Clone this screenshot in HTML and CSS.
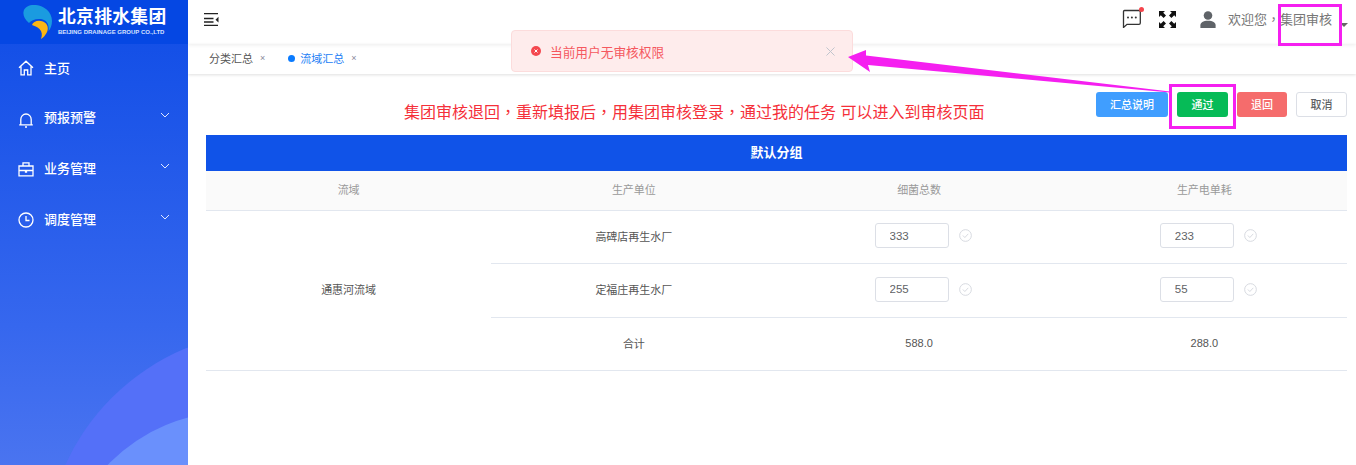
FILE: index.html
```html
<!DOCTYPE html>
<html lang="zh-CN">
<head>
  <meta charset="UTF-8" />
  <title>北京排水集团</title>
  <link rel="stylesheet" href="styles.css">
</head>
<body>

<div class="layout">
  <aside class="sidebar">
    <div class="bubble bubble-outer"></div>
    <div class="bubble bubble-inner"></div>

    <div class="logo">
      <svg class="logo-mark" width="30" height="34" viewBox="0 0 30 34">
        <path d="M9 0C18 -1 29 5 29 16C29 20 27.500 24 25.500 26C26.500 20 24 15 18 14C12 13.500 8 15.500 6 18C1.500 14 0 10 0.500 7C1 3 4.500 0.500 9 0Z" fill="#1a9be0"/>
        <path d="M9 20C10 16.500 15 14.500 20 16.500C25 18.500 26 24 23.500 28C22 30.500 20.500 32.500 18 34C19.500 30 19 26.500 16.500 24C14 21.500 11.500 21 9 20Z" fill="#fbb614"/>
      </svg>
      <div class="logo-text">
        <div class="logo-name">北京排水集团</div>
        <div class="logo-sub">BEIJING DRAINAGE GROUP CO.,LTD</div>
      </div>
    </div>

    <nav class="menu">
      <a class="menu-item menu-home">
        <svg class="menu-icon" viewBox="0 0 16 16"><path d="M1 7.800L8 1.200L15 7.800M3 6.500V14.800H6.300V10H9.700V14.800H13V6.500"/></svg>
        <span>主页</span>
      </a>
      <a class="menu-item">
        <svg class="menu-icon icon-bell" viewBox="0 0 16 16"><path d="M1.200 12.800H14.800M2.800 12.800V7.500C2.800 4.500 5 2 8 2C11 2 13.200 4.500 13.200 7.500V12.800M7 15H9"/></svg>
        <span>预报预警</span>
        <svg class="menu-arrow" viewBox="0 0 10 6"><path d="M1 1L5 5L9 1"/></svg>
      </a>
      <a class="menu-item">
        <svg class="menu-icon icon-low" viewBox="0 0 16 16"><path d="M1 5H15V14.800H1ZM1 9.500H15M5 5V1.800H11V5M7.500 9.500H8.500V11H7.500Z"/></svg>
        <span>业务管理</span>
        <svg class="menu-arrow" viewBox="0 0 10 6"><path d="M1 1L5 5L9 1"/></svg>
      </a>
      <a class="menu-item">
        <svg class="menu-icon icon-low" viewBox="0 0 16 16"><circle cx="8" cy="8" r="7"/><path d="M8 4V8.500H11.500"/></svg>
        <span>调度管理</span>
        <svg class="menu-arrow" viewBox="0 0 10 6"><path d="M1 1L5 5L9 1"/></svg>
      </a>
    </nav>
  </aside>

  <div class="main">
    <header class="topbar">
      <svg class="fold-icon" width="15" height="13" viewBox="0 0 15 13">
        <path d="M0 0.500H14M0 5.500H9.500M0 9H9.500M0 12.500H14" stroke="#222" stroke-width="1.300" fill="none"/>
        <path d="M14.500 3.800L11.500 6.800L14.500 9.500Z" fill="#222"/>
      </svg>
      <div class="topbar-right">
        <span class="msg-icon">
          <svg width="20" height="20" viewBox="0 0 20 20">
            <path d="M3.500 2.500H18C18.800 2.500 19.300 3 19.300 3.800V15C19.300 15.800 18.800 16.300 18 16.300H6L2.500 19.500V3.800C2.500 3 2.800 2.500 3.500 2.500Z" fill="none" stroke="#333" stroke-width="1.300"/>
            <circle cx="7" cy="9.500" r="1" fill="#333"/>
            <circle cx="10.900" cy="9.500" r="1" fill="#333"/>
            <circle cx="14.800" cy="9.500" r="1" fill="#333"/>
          </svg>
          <i class="msg-dot"></i>
        </span>
        <svg class="screen-icon" width="17" height="17" viewBox="0 0 17 17" fill="#111">
          <path d="M0 0H6L4.200 1.800L7 4.600L4.600 7L1.800 4.200L0 6Z"/>
          <path d="M17 0V6L15.200 4.200L12.400 7L10 4.600L12.800 1.800L11 0Z"/>
          <path d="M0 17V11L1.800 12.800L4.600 10L7 12.400L4.200 15.200L6 17Z"/>
          <path d="M17 17H11L12.800 15.200L10 12.400L12.400 10L15.200 12.800L17 11Z"/>
        </svg>
        <svg class="user-icon" width="18" height="17" viewBox="0 0 18 19" fill="#5f6368">
          <circle cx="9" cy="5" r="4.800"/>
          <path d="M0.500 19V16C0.500 13 3.500 11 9 11C14.500 11 17.500 13 17.500 16V19Z"/>
        </svg>
        <span class="welcome">欢迎您<span class="comma" lang="zh-TW">，</span>集团审核</span>
        <i class="caret"></i>
      </div>
    </header>

    <div class="tabs">
      <span class="tab">分类汇总<em>×</em></span>
      <span class="tab tab-active"><i class="tab-dot"></i>流域汇总<em>×</em></span>
    </div>

    <div class="content">
      <div class="toolbar">
        <p class="notice">集团审核退回<span class="comma" lang="zh-TW">，</span>重新填报后<span class="comma" lang="zh-TW">，</span>用集团审核登录<span class="comma" lang="zh-TW">，</span>通过我的任务 可以进入到审核页面</p>
        <div class="actions">
          <button class="btn btn-blue">汇总说明</button>
          <button class="btn btn-green">通过</button>
          <button class="btn btn-red">退回</button>
          <button class="btn btn-plain">取消</button>
        </div>
      </div>

      <div class="group-title">默认分组</div>
      <table class="data-table">
        <thead>
          <tr>
            <th>流域</th>
            <th>生产单位</th>
            <th>细菌总数</th>
            <th>生产电单耗</th>
          </tr>
        </thead>
        <tbody>
          <tr>
            <td rowspan="3">通惠河流域</td>
            <td>高碑店再生水厂</td>
            <td><div class="cell-input"><input value="333"><svg class="check" viewBox="0 0 14 14"><circle cx="7" cy="7" r="6.300"/><path d="M4.200 7L6.300 9.200L10 5.200"/></svg></div></td>
            <td><div class="cell-input"><input value="233"><svg class="check" viewBox="0 0 14 14"><circle cx="7" cy="7" r="6.300"/><path d="M4.200 7L6.300 9.200L10 5.200"/></svg></div></td>
          </tr>
          <tr>
            <td>定福庄再生水厂</td>
            <td><div class="cell-input"><input value="255"><svg class="check" viewBox="0 0 14 14"><circle cx="7" cy="7" r="6.300"/><path d="M4.200 7L6.300 9.200L10 5.200"/></svg></div></td>
            <td><div class="cell-input"><input value="55"><svg class="check" viewBox="0 0 14 14"><circle cx="7" cy="7" r="6.300"/><path d="M4.200 7L6.300 9.200L10 5.200"/></svg></div></td>
          </tr>
          <tr>
            <td>合计</td>
            <td>588.0</td>
            <td>288.0</td>
          </tr>
        </tbody>
      </table>
    </div>
  </div>
</div>

<div class="toast">
  <svg class="toast-icon" width="10" height="10" viewBox="0 0 10 10">
    <circle cx="5" cy="5" r="5" fill="#f4484f"/>
    <path d="M3.500 3.500L6.500 6.500M6.500 3.500L3.500 6.500" stroke="#fff" stroke-width="1"/>
  </svg>
  <span class="toast-text">当前用户无审核权限</span>
  <svg class="toast-close" width="9" height="9" viewBox="0 0 10 10">
    <path d="M0.500 0.500L9.500 9.500M9.500 0.500L0.500 9.500" stroke="#c0c4cc" stroke-width="1.100"/>
  </svg>
</div>

<!-- annotations drawn on top of the screenshot -->
<div class="mark mark-user"></div>
<div class="mark mark-pass"></div>
<svg class="mark-arrow" width="340" height="60" viewBox="0 0 340 60">
  <path d="M0 9L18 2L18 7.500L322 43.500L322 44.500L20 17L22 24Z" fill="#f51ff0"/>
</svg>

</body>
</html>
```

FILE: styles.css
```css
* {
  box-sizing: border-box;
}
html, body {
  height: 100%;
}
body {
  margin: 0;
  font-family: "Liberation Sans", "Noto Sans CJK SC", sans-serif;
  font-size: 12px;
  color: #555;
  background: #fff;
  overflow: hidden;
}
.layout {
  display: flex;
  height: 100vh;
}
.comma {
  font-family: "Noto Sans CJK TC", sans-serif;
}

/* sidebar */
.sidebar {
  position: relative;
  width: 188px;
  flex-shrink: 0;
  overflow: hidden;
  color: #fff;
  background: linear-gradient(180deg, #0f4ce6 0%, #3667ee 70%, #4a74f0 100%);
}
.bubble {
  position: absolute;
  border-radius: 50%;
}
.bubble-outer {
  width: 456px;
  height: 456px;
  left: 45px;
  top: 331px;
  background: #5470f8;
}
.bubble-inner {
  width: 343px;
  height: 343px;
  left: 60px;
  top: 412px;
  background: #6a90fc;
}
.logo {
  position: relative;
  height: 44px;
  display: flex;
  align-items: flex-start;
  padding: 5px 0 0 23px;
  background: #0547e3;
}
.logo-text {
  margin: 3px 0 0 5px;
}
.logo-name {
  font-size: 17.800px;
  line-height: 19px;
  font-weight: 700;
  letter-spacing: 0.300px;
  white-space: nowrap;
}
.logo-sub {
  font-size: 6px;
  line-height: 8px;
  font-weight: 700;
  margin-top: 1px;
  color: #d5e2ff;
  white-space: nowrap;
}
.menu {
  position: relative;
}
.menu-item {
  display: flex;
  align-items: center;
  height: 51px;
  padding-left: 18px;
  font-size: 13px;
  font-weight: 500;
  color: #fff;
}
.menu-home {
  height: 47px;
}
.menu-icon {
  width: 16px;
  height: 16px;
  margin-right: 10px;
  fill: none;
  stroke: #fff;
  stroke-width: 1.300;
}
.icon-bell {
  margin-top: 6px;
}
.icon-low {
  margin-top: 2px;
}
.menu-arrow {
  width: 10px;
  height: 6px;
  margin: -4px 18px 0 auto;
  fill: none;
  stroke: #dfe8ff;
  stroke-width: 1;
}

/* top bar */
.main {
  flex: 1;
  min-width: 0;
}
.topbar {
  height: 44px;
  display: flex;
  align-items: center;
  justify-content: space-between;
  padding: 0 8px 8px 16px;
  box-shadow: 0 1px 4px rgba(0,0,0,0.08);
}
.fold-icon {
  margin-top: 3px;
}
.topbar-right {
  display: flex;
  align-items: center;
}
.msg-icon {
  position: relative;
  display: flex;
  width: 20px;
  height: 20px;
}
.msg-dot {
  position: absolute;
  top: -1px;
  right: -3px;
  width: 5px;
  height: 5px;
  border-radius: 50%;
  background: #f5454c;
}
.screen-icon {
  margin: 3px 0 0 18px;
}
.user-icon {
  margin: 3px 0 0 23px;
}
.welcome {
  margin-left: 11px;
  font-size: 13px;
  color: #777;
  white-space: nowrap;
}
.caret {
  width: 0;
  height: 0;
  margin: 14px 0 0 8px;
  border: 4px solid transparent;
  border-top-color: #666;
  border-bottom: 0;
}

/* tabs */
.tabs {
  height: 30px;
  display: flex;
  align-items: center;
  padding: 0 0 2px 21px;
  box-shadow: 0 1px 3px rgba(0,0,0,0.13);
}
.tab {
  display: flex;
  align-items: center;
  margin-right: 23px;
  font-size: 11px;
  color: #555;
}
.tab em {
  margin-left: 7px;
  font-size: 9px;
  font-style: normal;
  color: #889;
}
.tab-active {
  color: #1a7df5;
}
.tab-dot {
  width: 7px;
  height: 7px;
  margin-right: 5px;
  border-radius: 50%;
  background: #0a7bff;
}

/* content */
.content {
  padding: 18px 9px 0 18px;
}
.toolbar {
  display: flex;
  align-items: center;
  height: 25px;
  margin-bottom: 18px;
}
.notice {
  flex: 1;
  margin: 0 0 0 198px;
  padding-top: 13px;
  font-size: 16px;
  color: #f5303a;
  white-space: nowrap;
}
.actions {
  display: flex;
  gap: 9px;
}
.btn {
  height: 25px;
  width: 51px;
  padding: 0 0 2px;
  border: 1px solid transparent;
  border-radius: 3px;
  font-family: inherit;
  font-size: 11px;
  font-weight: 500;
  color: #fff;
}
.btn-blue {
  width: 72px;
  background: #409eff;
}
.btn-green {
  background: #06bb57;
}
.btn-red {
  width: 50px;
  background: #f56c6c;
}
.btn-plain {
  background: #fff;
  border-color: #dcdfe6;
  color: #606266;
}
.group-title {
  height: 36px;
  line-height: 35px;
  text-align: center;
  font-size: 13px;
  font-weight: 700;
  color: #fff;
  background: #1053e8;
}
.data-table {
  width: 100%;
  border-collapse: collapse;
  table-layout: fixed;
  font-size: 11px;
}
.data-table th {
  height: 39px;
  padding: 0 0 2px;
  font-weight: 400;
  color: #999;
  background: #fafafa;
  border-bottom: 1px solid #e2e7ef;
}
.data-table td {
  height: 53.500px;
  padding: 0 0 2px;
  text-align: center;
  color: #555;
  border-bottom: 1px solid #e2e7ef;
}
.cell-input {
  display: flex;
  align-items: center;
  justify-content: flex-start;
  padding-left: 98px;
}
.cell-input input {
  width: 74.500px;
  height: 25px;
  padding: 0 14px;
  border: 1px solid #dcdfe6;
  border-radius: 3px;
  font-family: "Liberation Sans", sans-serif;
  font-size: 11.500px;
  color: #606266;
  outline: none;
}
.check {
  width: 13px;
  height: 13px;
  margin-left: 10px;
  fill: none;
  stroke: #d4d7dd;
  stroke-width: 1;
}

/* message toast */
.toast {
  position: absolute;
  left: 511px;
  top: 30px;
  width: 342px;
  height: 42px;
  display: flex;
  align-items: center;
  padding: 0 17px 0 19px;
  background: #feecec;
  border: 1px solid #fcdcdc;
  border-radius: 4px;
}
.toast-text {
  margin-left: 9px;
  font-size: 12.700px;
  color: #f5585f;
}
.toast-close {
  margin-left: auto;
}

/* magenta annotations */
.mark {
  position: absolute;
  border: 3px solid #f51ff0;
}
.mark-user {
  left: 1278px;
  top: 4px;
  width: 64px;
  height: 42px;
}
.mark-pass {
  left: 1169px;
  top: 84px;
  width: 67px;
  height: 45px;
}
.mark-arrow {
  position: absolute;
  left: 848px;
  top: 48px;
}
```
